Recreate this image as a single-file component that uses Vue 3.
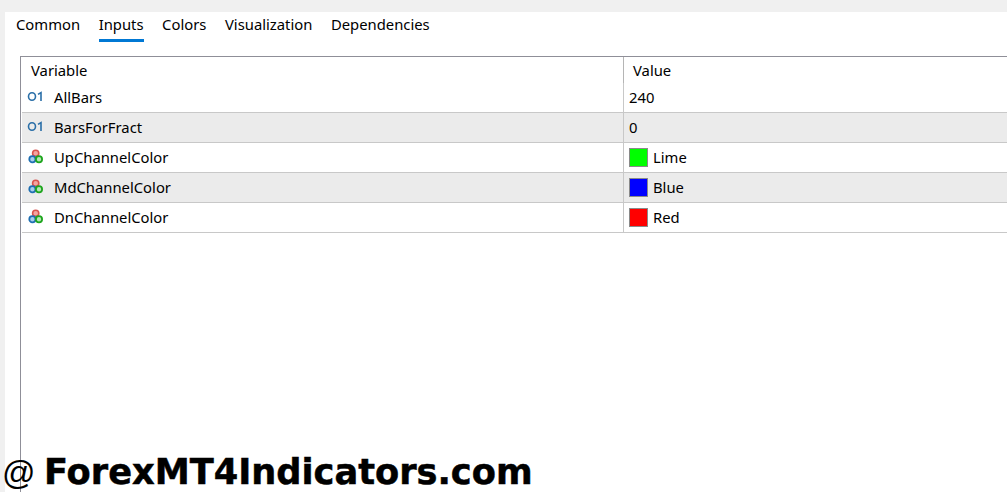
<template>
  <div class="page">
    <div class="panel">
      <div class="tabs">
        <div class="tab" :class="{ active: tab == 'Inputs' }" v-for="tab in tabs" :key="tab">{{ tab }}</div>
      </div>
      <div class="grid">
        <div class="head">
          <div class="head-var">Variable</div>
          <div class="head-val">Value</div>
        </div>
        <div class="row" :class="{ odd: index % 2 == 1 }" v-for="(item, index) in inputs" :key="item.name">
          <div class="cell-var">
            <svg v-if="item.type == 'int'" class="icon" viewBox="0 0 18 16">
              <ellipse cx="5" cy="7.5" rx="3.5" ry="3.7" fill="none" stroke="#2a6fa8" stroke-width="1.6" />
              <path d="M11 5.4 L14 3.6 V12" fill="none" stroke="#2a6fa8" stroke-width="1.6" />
            </svg>
            <svg v-else class="icon" viewBox="0 0 18 16">
              <circle cx="8.7" cy="4.3" r="3.1" fill="#f6a5a0" stroke="#d9534f" stroke-width="1.6" />
              <circle cx="5.4" cy="10.2" r="3.1" fill="#a9cdea" stroke="#1f6fb2" stroke-width="1.8" />
              <circle cx="12" cy="10.2" r="3.1" fill="#b5e6b5" stroke="#1ea51e" stroke-width="1.8" />
            </svg>
            <span class="name">{{ item.name }}</span>
          </div>
          <div class="cell-val">
            <span v-if="item.color" class="swatch" :style="{ background: item.color }"></span>
            <span class="val-text">{{ item.value }}</span>
          </div>
        </div>
      </div>
    </div>
    <div class="mark"><span class="at">@</span><span class="site">ForexMT4Indicators.com</span></div>
  </div>
</template>

<script setup>
const tabs = ["Common", "Inputs", "Colors", "Visualization", "Dependencies"]

const inputs = [
  { name: "AllBars", type: "int", value: "240" },
  { name: "BarsForFract", type: "int", value: "0" },
  { name: "UpChannelColor", type: "color", value: "Lime", color: "#00ff00" },
  { name: "MdChannelColor", type: "color", value: "Blue", color: "#0000ff" },
  { name: "DnChannelColor", type: "color", value: "Red", color: "#ff0000" },
]
</script>

<style scoped>
.page {
  position: relative;
  width: 1007px;
  height: 492px;
  overflow: hidden;
  background: #f0f0f0;
  padding: 12px 0 0 5px;
  box-sizing: border-box;
  font-family: "Noto Sans", "Open Sans", sans-serif;
  font-size: 14.8px;
  color: #000;
}
.panel {
  background: #fff;
  height: 480px;
  padding-left: 15px;
}
.tabs {
  display: flex;
  gap: 18.6px;
  margin-left: -4px;
  height: 44px;
}
.tab {
  height: 30px;
  line-height: 24px;
  box-sizing: border-box;
}
.tab.active {
  border-bottom: 3px solid #0078d4;
}
.grid {
  border: 1px solid #8f8f98;
  border-right: none;
  border-bottom: none;
  width: 1000px;
  height: 440px;
}
.head {
  display: flex;
  height: 26px;
  line-height: 26px;
}
.head-var {
  width: 602px;
  box-sizing: border-box;
  padding-left: 10px;
}
.head-val {
  padding-left: 9px;
  border-left: 1px solid #b5b5b5;
}
.row {
  display: flex;
  height: 29px;
  border-bottom: 1px solid #c8c8c8;
  margin-left: 1px;
}
.row.odd {
  background: #ebebeb;
}
.cell-var {
  width: 601px;
  display: flex;
  align-items: center;
  flex-shrink: 0;
}
.icon {
  width: 18px;
  height: 16px;
  margin-left: 5px;
  margin-bottom: 1px;
}
.name {
  margin-left: 9px;
  margin-bottom: 2px;
}
.cell-val {
  display: flex;
  align-items: center;
  gap: 5px;
  padding-left: 5px;
  border-left: 1px solid #c8c8c8;
}
.val-text {
  margin-bottom: 2px;
}
.swatch {
  width: 17px;
  height: 17px;
  border: 1px solid #8a8a8a;
  margin-bottom: 1px;
}
.mark {
  position: absolute;
  left: 2px;
  top: 451px;
  display: flex;
  align-items: baseline;
  font-family: "DejaVu Sans", sans-serif;
  font-weight: bold;
  font-size: 35.2px;
  line-height: 42px;
  color: #000;
  white-space: nowrap;
}
.at {
  width: 42px;
  font-family: "Liberation Sans", sans-serif;
  font-weight: normal;
  font-size: 33px;
}
.site {
  -webkit-text-stroke: 0.5px #000;
}
</style>
